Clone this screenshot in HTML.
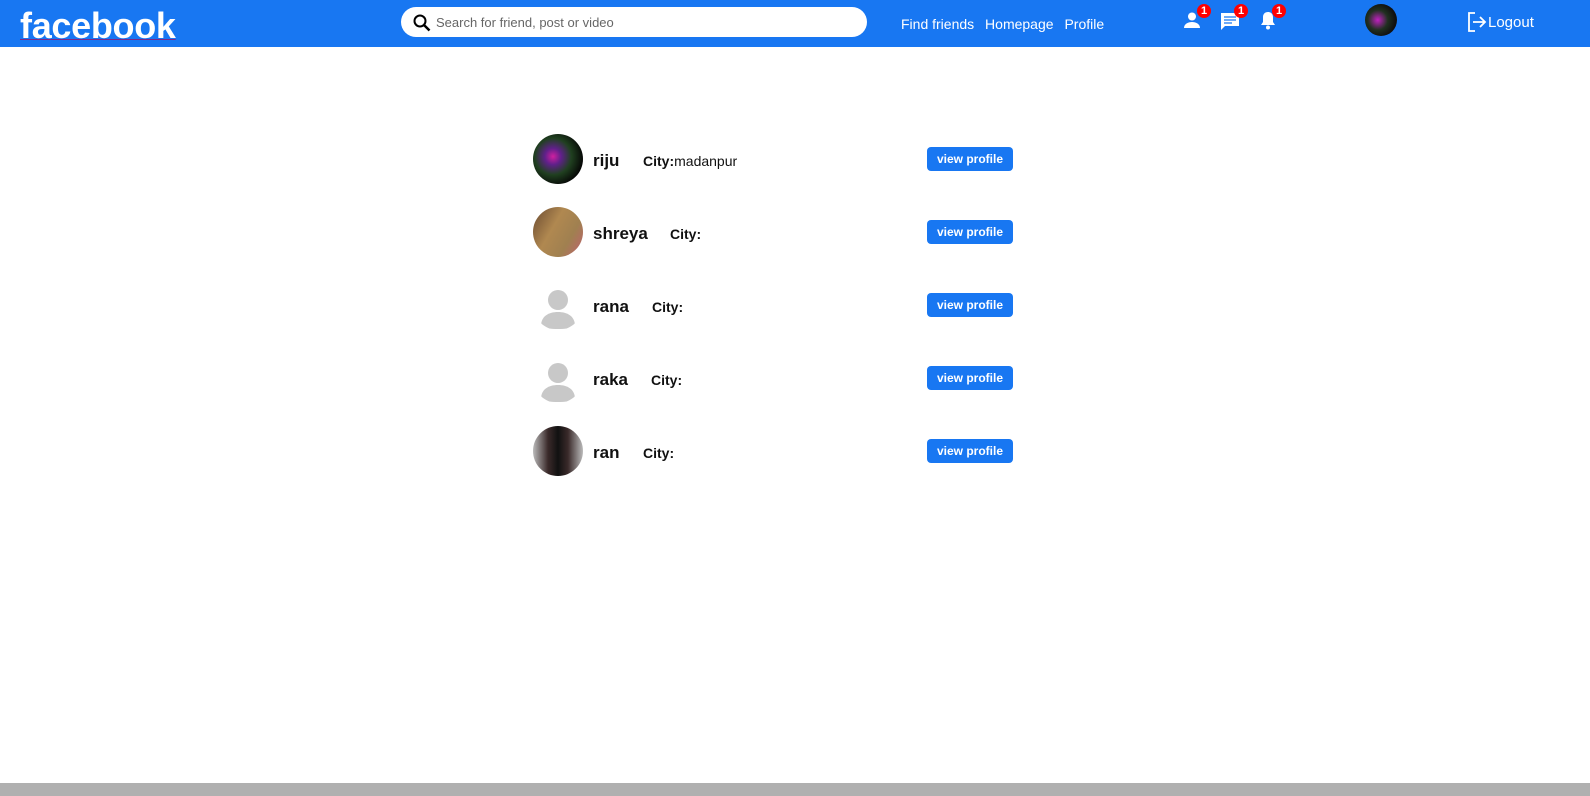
<!DOCTYPE html>
<html><head><style>
body{margin:0;width:1590px;height:796px;overflow:hidden;background:#fff;font-family:"Liberation Sans",sans-serif;position:relative}
.nav{position:absolute;left:0;top:0;width:1590px;height:47px;background:#1877f2;color:#fff}
.logo{position:absolute;left:20px;top:5px;font-size:36px;font-weight:bold;color:#fff;text-decoration:underline;text-decoration-color:#7a2a8a;text-decoration-thickness:1px;letter-spacing:-0.3px}
.search{position:absolute;left:401px;top:7px;width:466px;height:30px;background:#fff;border-radius:15px}
.search span{position:absolute;left:35px;top:8px;font-size:13px;color:#666}
.links{position:absolute;left:901px;top:16px;font-size:14px}
.links span{margin-right:7px}
.ic{position:absolute;top:10px}
.badge{position:absolute;top:-6px;right:-8px;width:14px;height:14px;border-radius:7px;background:#f00;color:#fff;font-size:11px;font-weight:bold;text-align:center;line-height:14px}
.row{position:absolute;left:533px;height:50px;width:480px}
.av{position:absolute;left:0;top:0;width:50px;height:50px;border-radius:25px;overflow:hidden}
.name{position:absolute;left:60px;top:17px;font-size:17px;font-weight:bold;color:#111}
.city{position:absolute;top:19px;font-size:14px;font-weight:bold;color:#111}
.city i{font-style:normal;font-weight:normal}
.btn{position:absolute;left:394px;top:13px;width:86px;height:24px;background:#1877f2;border-radius:4px;color:#fff;font-size:12px;font-weight:bold;text-align:center;line-height:24px}
.bot{position:absolute;left:0;top:783px;width:1590px;height:13px;background:#b0b0b0}
</style></head><body>
<div class="nav">
<div class="logo">facebook</div>
<div class="search"><svg style="position:absolute;left:12px;top:7px" width="18" height="18" viewBox="0 0 18 18"><circle cx="7" cy="7" r="5.5" fill="none" stroke="#000" stroke-width="2"/><line x1="11" y1="11" x2="16.5" y2="16.5" stroke="#000" stroke-width="2.5"/></svg><span>Search for friend, post or video</span></div>
<div class="links"><span>Find friends</span> <span>Homepage</span> <span>Profile</span></div>
<div class="ic" style="left:1183px;top:12px"><svg width="18" height="16" viewBox="0 0 18 16"><circle cx="9" cy="4.5" r="4" fill="#fff"/><path d="M1 16c0-4 4-6 8-6s8 2 8 6z" fill="#fff"/></svg><div class="badge" style="top:-8px;right:-10px">1</div></div>
<div class="ic" style="left:1220px;top:12px"><svg width="20" height="19" viewBox="0 0 20 19"><path d="M1 1h18v13H5l-4 4z" fill="#fff"/><path d="M4 5h12M4 8h12M4 11h8" stroke="#1877f2" stroke-width="1.3"/></svg><div class="badge" style="top:-8px;right:-8px">1</div></div>
<div class="ic" style="left:1260px;top:11px"><svg width="16" height="19" viewBox="0 0 16 19"><path d="M8 1c3 0 5 2 5 5v5l2 3H1l2-3V6c0-3 2-5 5-5z" fill="#fff"/><circle cx="8" cy="16.5" r="2" fill="#fff"/></svg><div class="badge" style="top:-7px;right:-10px">1</div></div>
<div style="position:absolute;left:1365px;top:4px;width:32px;height:32px;border-radius:16px;background:radial-gradient(circle at 40% 50%,#c020c0 0,#203020 40%,#101010 70%)"></div>
<svg style="position:absolute;left:1467px;top:12px" width="20" height="20" viewBox="0 0 20 20"><path d="M8 1H2v18h6" fill="none" stroke="#fff" stroke-width="1.8"/><path d="M6 10h12M13 5l5 5-5 5" fill="none" stroke="#fff" stroke-width="1.8"/></svg>
<div style="position:absolute;left:1488px;top:14px;font-size:15px">Logout</div>
</div>

<div class="row" style="top:134px"><div class="av" style="background:radial-gradient(circle at 40% 45%,#d020a0 0,#60208a 20%,#204020 45%,#050505 75%)"></div><div class="name">riju</div><div class="city" style="left:110px">City:<i>madanpur</i></div><div class="btn">view profile</div></div>
<div class="row" style="top:207px"><div class="av" style="background:linear-gradient(120deg,#6a4a30 0,#b08850 40%,#a08050 70%,#c06070 100%)"></div><div class="name">shreya</div><div class="city" style="left:137px">City:</div><div class="btn">view profile</div></div>
<div class="row" style="top:280px"><div class="av"><svg width="50" height="50" viewBox="0 0 50 50"><circle cx="25" cy="20" r="10" fill="#c8c8c8"/><path d="M8 46c0-10 8-14 17-14s17 4 17 14c-5 4-29 4-34 0z" fill="#c8c8c8"/></svg></div><div class="name">rana</div><div class="city" style="left:119px">City:</div><div class="btn">view profile</div></div>
<div class="row" style="top:353px"><div class="av"><svg width="50" height="50" viewBox="0 0 50 50"><circle cx="25" cy="20" r="10" fill="#c8c8c8"/><path d="M8 46c0-10 8-14 17-14s17 4 17 14c-5 4-29 4-34 0z" fill="#c8c8c8"/></svg></div><div class="name">raka</div><div class="city" style="left:118px">City:</div><div class="btn">view profile</div></div>
<div class="row" style="top:426px"><div class="av" style="background:linear-gradient(90deg,#bbb 0,#3a2a2a 30%,#111 50%,#3a2a2a 70%,#bbb 100%)"></div><div class="name">ran</div><div class="city" style="left:110px">City:</div><div class="btn">view profile</div></div>

<div class="bot"></div>
</body></html>
